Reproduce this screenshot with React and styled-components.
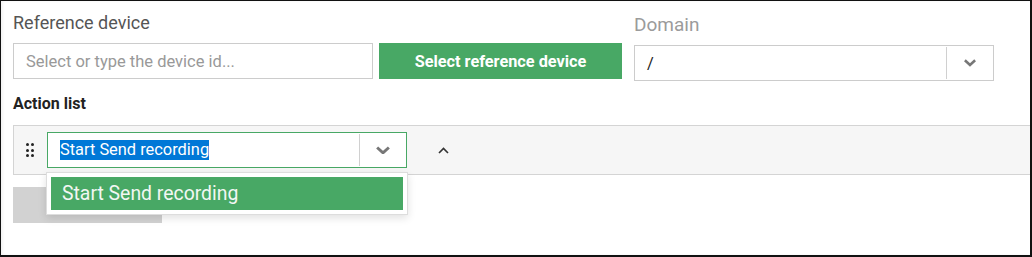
import * as React from "react";
import styled, {createGlobalStyle} from "styled-components";

const GlobalStyle = createGlobalStyle`
  body {
    margin: 0;
    font-family: Roboto, "Liberation Sans", sans-serif;
    background: #fff;
  }
`;

const Frame = styled.div`
  box-sizing: border-box;
  width: 1032px;
  height: 257px;
  border-top: 1px solid #111;
  border-left: 1px solid #111;
  border-right: 2px solid #111;
  border-bottom: 2px solid #111;
  box-shadow: inset 2px 0 3px rgba(0, 0, 0, 0.05);
  padding: 11px 0 0 12px;
  overflow: hidden;
`;

const TopRow = styled.div`
  display: flex;
  align-items: flex-start;
  gap: 12px;
`;

const Group = styled.div`
  display: flex;
  flex-direction: column;
  padding-top: ${props => props.offset || 0}px;
`;

const Label = styled.label`
  font-size: ${props => props.size || 18}px;
  line-height: 22px;
  color: ${props => props.muted ? "#9b9b9b" : "#555"};
  margin-bottom: 9px;
`;

const Controls = styled.div`
  display: flex;
  gap: 6px;
`;

const TextInput = styled.input`
  box-sizing: border-box;
  width: 360px;
  height: 36px;
  border: 1px solid #ccc;
  padding: 0 12px;
  font-family: inherit;
  font-size: 16.5px;
  color: #222;
  outline: none;

  &::placeholder {
    color: #999;
  }
`;

const GreenButton = styled.button`
  box-sizing: border-box;
  width: 243px;
  height: 36px;
  border: none;
  background: #48a865;
  color: #fff;
  font-family: inherit;
  font-size: 16.3px;
  font-weight: 700;
  cursor: pointer;
`;

const Select = styled.div`
  box-sizing: border-box;
  display: flex;
  width: 360px;
  height: 36px;
  background: #fff;
  border: 1px solid ${props => props.active ? "#48a865" : "#ccc"};
`;

const SelectValue = styled.div`
  flex: 1;
  display: flex;
  align-items: center;
  padding: 0 12px;
  font-size: 16.4px;
  color: #222;
`;

const Highlight = styled.span`
  background: #0078d7;
  color: #fff;
  line-height: 20px;
`;

const SelectArrow = styled.div`
  width: 46px;
  display: flex;
  align-items: center;
  justify-content: center;
  border-left: 1px solid #d0d0d0;
  margin: 1px 0;
`;

const SectionTitle = styled.div`
  margin-top: 13px;
  margin-bottom: 11px;
  font-size: 16px;
  line-height: 20px;
  font-weight: 700;
  color: #222;
`;

const ActionRow = styled.div`
  box-sizing: border-box;
  height: 50px;
  display: flex;
  align-items: center;
  padding-left: 12px;
  background: #f6f6f6;
  border: 1px solid #d4d4d4;
  border-right: none;
`;

const Handle = styled.div`
  display: grid;
  grid-template-columns: repeat(2, 3px);
  grid-auto-rows: 3px;
  column-gap: 2px;
  row-gap: 2.5px;
  margin-right: 13px;
`;

const Dot = styled.span`
  width: 3px;
  height: 3px;
  border-radius: 50%;
  background: #222;
`;

const SelectWrap = styled.div`
  position: relative;
`;

const Menu = styled.div`
  position: absolute;
  top: calc(100% + 4px);
  left: -1px;
  z-index: 2;
  box-sizing: border-box;
  width: 362px;
  padding: 4px;
  background: #fff;
  border: 1px solid #ddd;
  box-shadow: 0 3px 8px rgba(0, 0, 0, 0.12);
`;

const MenuItem = styled.div`
  height: 33px;
  display: flex;
  align-items: center;
  padding-left: 11px;
  background: #48a865;
  color: #f2f7f3;
  font-size: 19.4px;
`;

const MoveButton = styled.div`
  margin-left: 31px;
  display: flex;
  align-items: center;
`;

const AddButton = styled.button`
  display: block;
  margin-top: 12px;
  width: 149px;
  height: 36px;
  border: none;
  background: #d2d2d2;
`;

const Chevron = ({width = 14}) => (
  <svg width={width} height={width * 0.55} viewBox="0 0 16 9">
    <polyline points="2,1.5 8,7 14,1.5" fill="none" stroke="#777" strokeWidth="3" />
  </svg>
);

const Caret = () => (
  <svg width="11" height="7" viewBox="0 0 11 7">
    <polyline points="1,6 5.5,1.5 10,6" fill="none" stroke="#333" strokeWidth="1.6" />
  </svg>
);

export default function App() {
  return (
    <Frame>
      <GlobalStyle/>
      <TopRow>
        <Group>
          <Label>Reference device</Label>
          <Controls>
            <TextInput placeholder="Select or type the device id..." />
            <GreenButton>Select reference device</GreenButton>
          </Controls>
        </Group>
        <Group offset={2}>
          <Label muted size={19}>Domain</Label>
          <Select>
            <SelectValue>/</SelectValue>
            <SelectArrow><Chevron width={14} /></SelectArrow>
          </Select>
        </Group>
      </TopRow>

      <SectionTitle>Action list</SectionTitle>

      <ActionRow>
        <Handle>
          {[0, 1, 2, 3, 4, 5].map(i => <Dot key={i} />)}
        </Handle>
        <SelectWrap>
          <Select active>
            <SelectValue><Highlight>Start Send recording</Highlight></SelectValue>
            <SelectArrow><Chevron width={16} /></SelectArrow>
          </Select>
          <Menu>
            <MenuItem>Start Send recording</MenuItem>
          </Menu>
        </SelectWrap>
        <MoveButton><Caret /></MoveButton>
      </ActionRow>

      <AddButton aria-label="Add action" />
    </Frame>
  );
}
